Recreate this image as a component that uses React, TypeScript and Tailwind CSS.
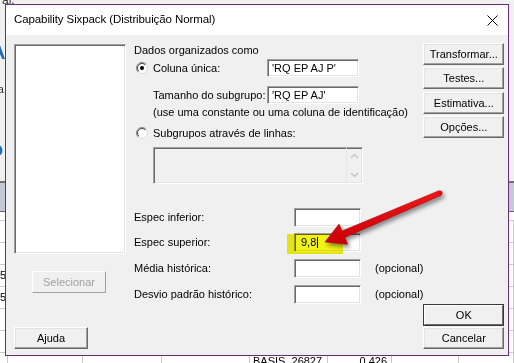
import React from "react";

const inputCls =
  "bg-white border border-t-[#a0a0a0] border-l-[#a0a0a0] border-b-white border-r-white shadow-[inset_1px_1px_0_#696969,inset_-1px_-1px_0_#e3e3e3] flex items-center pl-[4px] text-[11px] leading-none whitespace-nowrap overflow-hidden";

const btnCls =
  "bg-[#f0f0f0] border border-t-white border-l-white border-b-[#696969] border-r-[#696969] shadow-[inset_-1px_-1px_0_#a0a0a0,inset_1px_1px_0_#e3e3e3] flex items-center justify-center text-[11px] leading-none";

function Radio({ checked }: { checked?: boolean }) {
  return (
    <svg width="12" height="12" viewBox="0 0 12 12" className="shrink-0">
      <circle cx="6" cy="6" r="5.5" fill="#fff" stroke="#d8d8d8" />
      <path d="M2.1 9.9 A5.5 5.5 0 0 1 9.9 2.1" stroke="#8a8a8a" fill="none" />
      <path d="M2.8 9.2 A4.5 4.5 0 0 1 9.2 2.8" stroke="#444" fill="none" />
      {checked && <circle cx="6" cy="6" r="2" fill="#000" />}
    </svg>
  );
}

function Background() {
  const cols = [8, 75, 79, 88, 78, 64, 67, 55];
  const rows: { left?: string; basis?: boolean }[] = [
    {},
    {},
    { left: "5" },
    { left: "5" },
    {},
    {},
    { basis: true },
  ];
  return (
    <div className="flex flex-col w-[514px] h-[363px] overflow-hidden">
      <div className="h-[181px] shrink-0 bg-[#f0f0f0] flex flex-col">
        <div className="mt-[-9px] ml-[2px] text-[12px] text-[#333]">al.</div>
        <div className="mt-[33px] ml-[-9px] text-[20px] font-bold text-[#1f6db5] leading-none">A</div>
        <div className="mt-[22px] ml-[-6px] text-[11px] text-[#333] leading-none">ra</div>
        <div className="mt-[44px] ml-[-9px] text-[20px] font-bold text-[#1f6db5] leading-none">o</div>
      </div>
      <div className="h-[31px] shrink-0 bg-[#c2cad5] border-t-2 border-t-[#707070] border-b border-b-[#6a6a6a]" />
      <div className="h-[9px] shrink-0 bg-white border-b border-[#c8c8c8]" />
      {rows.map((r, i) => (
        <div key={i} className="h-[22px] shrink-0 bg-white border-b border-[#c8c8c8] flex">
          {cols.map((w, j) => (
            <div
              key={j}
              style={{ width: w }}
              className={`h-full border-r border-[#c8c8c8] shrink-0 text-[11px] text-black flex overflow-hidden whitespace-nowrap ${
                r.basis ? "items-start" : "items-center"
              }`}
            >
              {j === 0 && r.left ? <span className="ml-auto pr-[3px]">{r.left}</span> : null}
              {j === 4 && r.basis ? <span className="pl-[3px] pt-[3px] leading-none">BASIS_26827</span> : null}
              {j === 5 && r.basis ? <span className="ml-auto pr-[4px] pt-[3px] leading-none">0,426</span> : null}
            </div>
          ))}
        </div>
      ))}
    </div>
  );
}

function Dialog() {
  return (
    <div className="absolute left-[5px] top-[4px] w-[504px] h-[352px] border border-[#6b2c7e] flex flex-col bg-[#f0f0f0]">
      <div className="h-[30px] bg-white flex items-center justify-between pl-[8px] pr-[10px] shrink-0">
        <span className="text-[11.5px] text-black font-['Liberation_Sans',Arial,sans-serif] tracking-[-0.1px]">
          Capability Sixpack (Distribuição Normal)
        </span>
        <svg width="11" height="11" viewBox="0 0 11 11">
          <path d="M0.5 0.5 L10.5 10.5 M10.5 0.5 L0.5 10.5" stroke="#000" strokeWidth="1" />
        </svg>
      </div>
      <div className="flex-1 flex pl-[8px] pr-[7px] pt-[9px] pb-[6px]">
        {/* left column */}
        <div className="w-[112px] flex flex-col shrink-0">
          <div className="h-[210px] bg-white border border-t-[#a0a0a0] border-l-[#a0a0a0] border-b-white border-r-white shadow-[inset_1px_1px_0_#696969,inset_-1px_-1px_0_#e3e3e3]" />
          <div className={`${btnCls} mt-[17px] ml-[18px] w-[74px] h-[22px] text-[#a0a0a0] border-b-[#a0a0a0] border-r-[#a0a0a0] shadow-none`}>
            Selecionar
          </div>
          <div className="flex-1" />
          <div className={`${btnCls} w-[74px] h-[22px]`}>Ajuda</div>
        </div>

        {/* middle column */}
        <div className="ml-[8px] flex-1 flex flex-col text-[11px] leading-[13px]">
          <div className="h-[15px]">Dados organizados como</div>
          <div className="h-[18px] flex items-center">
            <span className="ml-[2px]"><Radio checked /></span>
            <span className="ml-[5px] w-[114px]">Coluna única:</span>
            <div className={`${inputCls} w-[92px] h-[18px]`}>'RQ EP AJ P'</div>
          </div>
          <div className="mt-[9px] h-[18px] flex items-center pl-[19px]">
            <span className="w-[114px]">Tamanho do subgrupo:</span>
            <div className={`${inputCls} w-[92px] h-[18px]`}>'RQ EP AJ'</div>
          </div>
          <div className="mt-[2px] h-[13px] pl-[19px] whitespace-nowrap">
            (use uma constante ou uma coluna de identificação)
          </div>
          <div className="mt-[7px] h-[14px] flex items-center">
            <span className="ml-[2px]"><Radio /></span>
            <span className="ml-[5px]">Subgrupos através de linhas:</span>
          </div>
          <div className="mt-[7px] ml-[19px] w-[210px] h-[37px] bg-[#f0f0f0] border border-t-[#a0a0a0] border-l-[#a0a0a0] border-b-white border-r-white shadow-[inset_1px_1px_0_#696969,inset_-1px_-1px_0_#e3e3e3] flex justify-end">
            <div className="w-[16px] h-full border-l border-[#e6e6e6] flex flex-col items-center justify-between py-[5px]">
              <svg width="9" height="6" viewBox="0 0 9 6">
                <path d="M1 5 L4.5 1.5 L8 5" stroke="#c4c4c4" strokeWidth="1.3" fill="none" />
              </svg>
              <svg width="9" height="6" viewBox="0 0 9 6">
                <path d="M1 1 L4.5 4.5 L8 1" stroke="#c4c4c4" strokeWidth="1.3" fill="none" />
              </svg>
            </div>
          </div>
          <div className="mt-[24px] h-[19px] flex items-center">
            <span className="w-[160px]">Espec inferior:</span>
            <div className={`${inputCls} w-[67px] h-[19px]`} />
          </div>
          <div className="mt-[6px] h-[19px] flex items-center">
            <span className="w-[160px]">Espec superior:</span>
            <div className={`${inputCls} w-[67px] h-[19px] pl-[6px]`}>
              <span className="border-r border-black pr-[1px]">9,8</span>
            </div>
          </div>
          <div className="mt-[7px] h-[19px] flex items-center">
            <span className="w-[160px]">Média histórica:</span>
            <div className={`${inputCls} w-[67px] h-[19px]`} />
            <span className="ml-[14px]">(opcional)</span>
          </div>
          <div className="mt-[7px] h-[19px] flex items-center">
            <span className="w-[160px]">Desvio padrão histórico:</span>
            <div className={`${inputCls} w-[67px] h-[19px]`} />
            <span className="ml-[14px]">(opcional)</span>
          </div>
        </div>

        {/* right column */}
        <div className="w-[81px] shrink-0 flex flex-col mt-[-1px]">
          <div className={`${btnCls} h-[22px]`}>Transformar...</div>
          <div className={`${btnCls} h-[22px] mt-[2px]`}>Testes...</div>
          <div className={`${btnCls} h-[22px] mt-[3px]`}>Estimativa...</div>
          <div className={`${btnCls} h-[22px] mt-[2px]`}>Opções...</div>
          <div className="flex-1" />
          <div className="h-[22px] border border-[#3a3a3a] flex">
            <div className="flex-1 bg-[#f0f0f0] border border-t-white border-l-white border-b-[#696969] border-r-[#696969] flex items-center justify-center text-[11px] leading-none">
              OK
            </div>
          </div>
          <div className={`${btnCls} h-[22px] mt-[1px]`}>Cancelar</div>
        </div>
      </div>
    </div>
  );
}

function Overlay() {
  return (
    <>
      <div className="absolute left-[287px] top-[234px] w-[56px] h-[20px] bg-[#f2f21a] mix-blend-multiply blur-[0.5px]" />
      <svg
        className="absolute left-0 top-0 pointer-events-none drop-shadow-[2px_3px_2px_rgba(0,0,0,0.45)]"
        width="514"
        height="363"
        viewBox="0 0 514 363"
      >
        <defs>
          <linearGradient id="rg" x1="0" y1="0" x2="0" y2="1">
            <stop offset="0" stopColor="#f01818" />
            <stop offset="1" stopColor="#c80008" />
          </linearGradient>
        </defs>
        <polygon
          points="439.0,190.7 342.0,231.0 339.1,224.1 325,242 347.7,244.3 344.8,237.4 441.0,195.3"
          fill="url(#rg)"
          stroke="#b00008"
          strokeWidth="0.6"
          strokeLinejoin="round"
        />
        <circle cx="440" cy="193" r="2.5" fill="#e01010" />
      </svg>
    </>
  );
}

export default function App() {
  return (
    <div className="relative w-[514px] h-[363px] overflow-hidden bg-[#f0f0f0] font-['Liberation_Sans',Arial,sans-serif] text-black">
      <Background />
      <Dialog />
      <Overlay />
    </div>
  );
}
